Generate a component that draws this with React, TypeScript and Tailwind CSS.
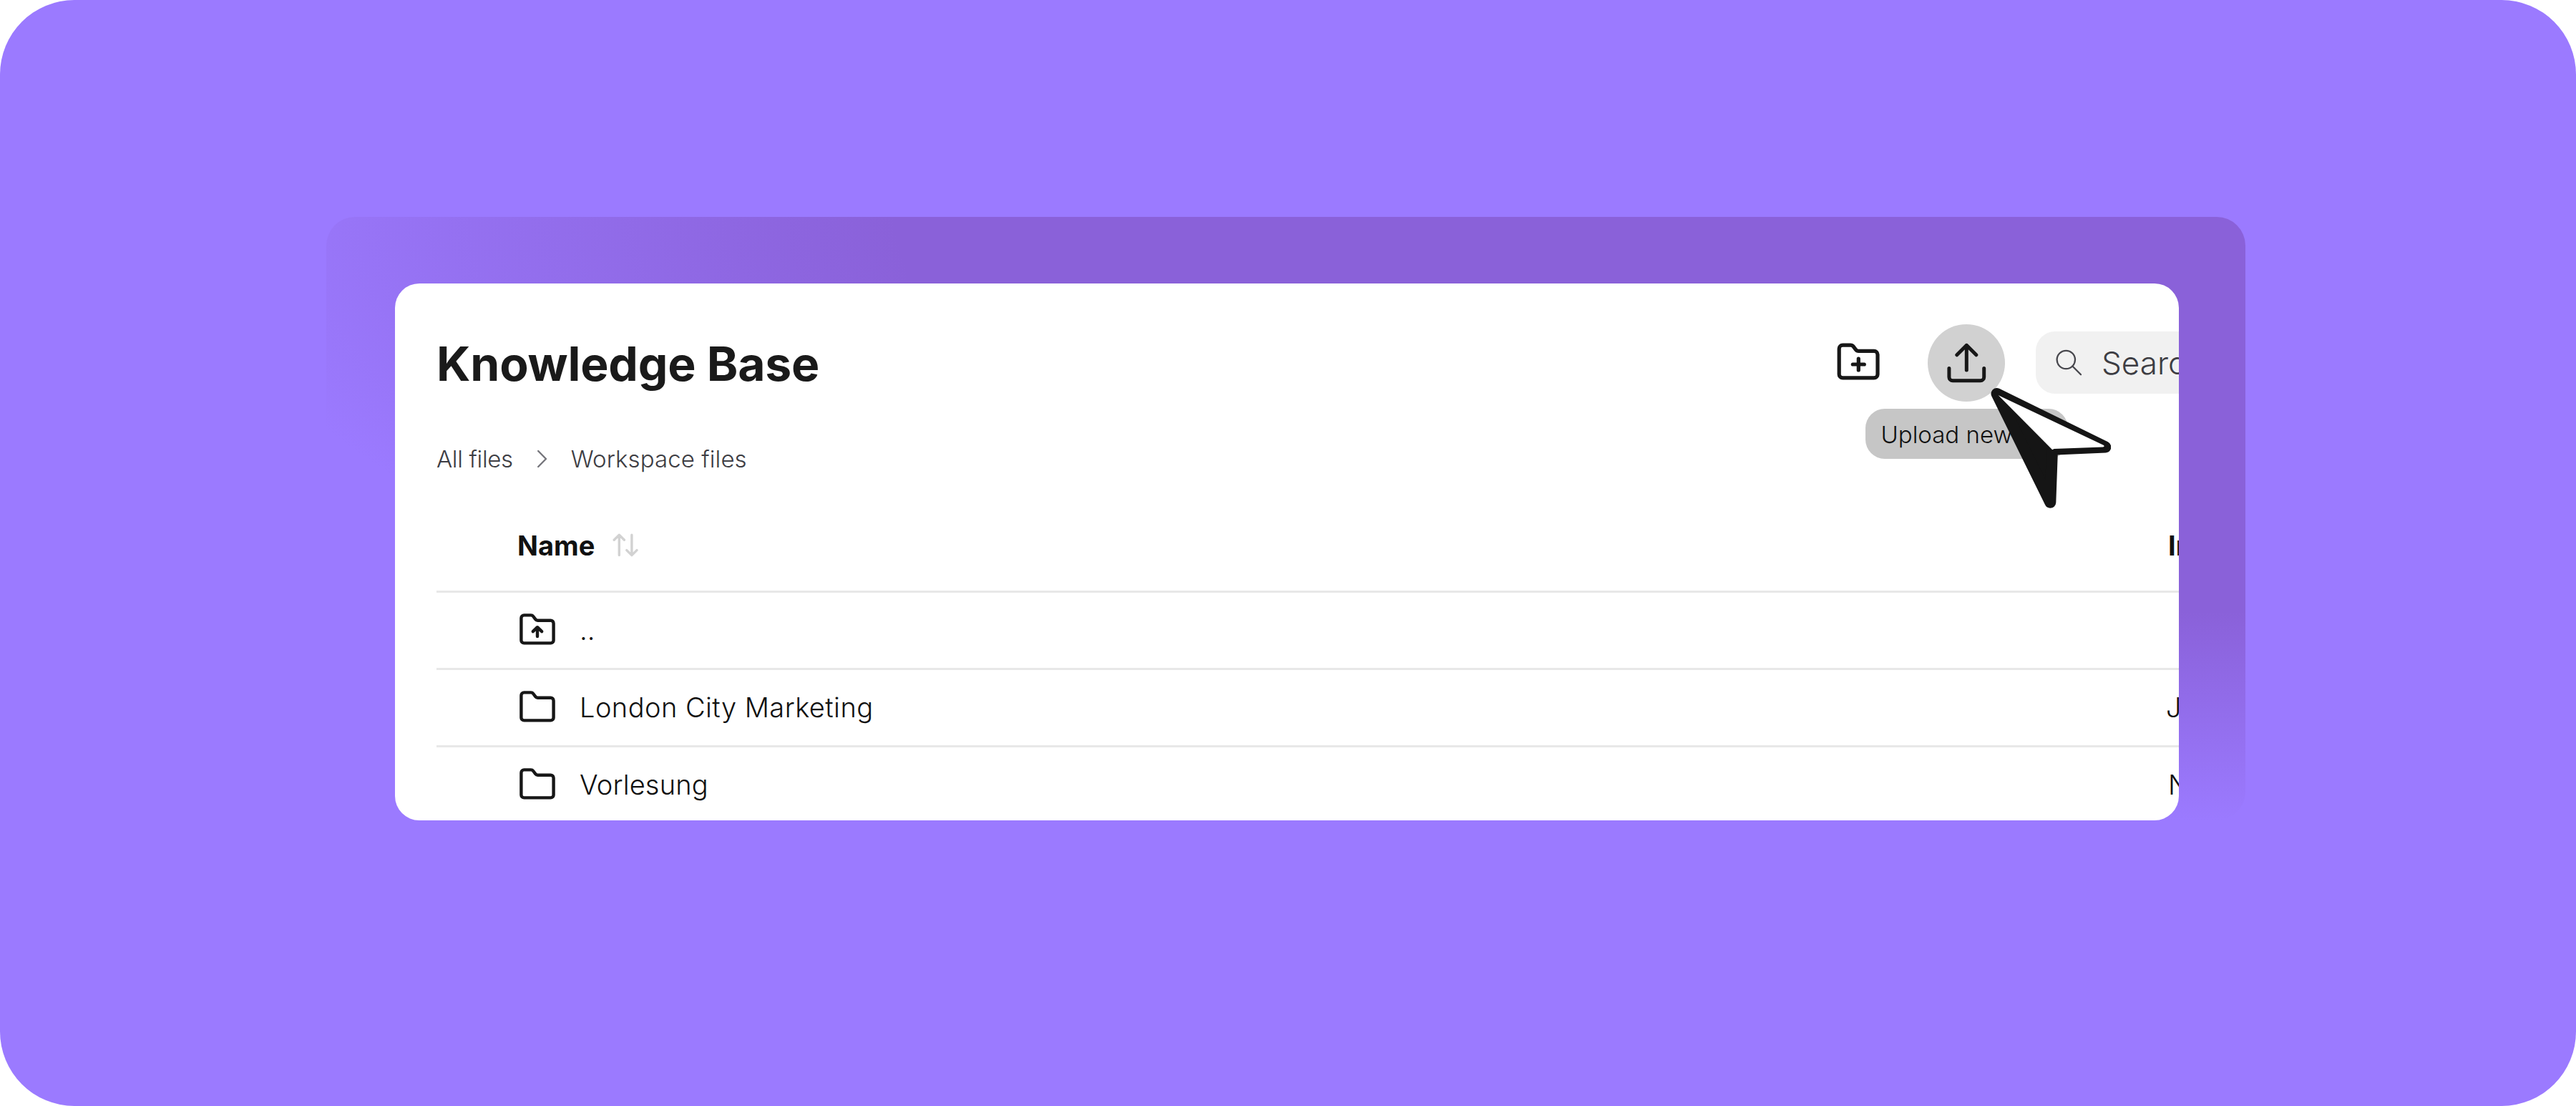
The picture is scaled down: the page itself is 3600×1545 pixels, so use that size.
import type { ReactNode } from 'react'

type Row = {
  name: string
  info: string
  parent?: boolean
  tracking: string
  infoClass: string
}

const rows: Row[] = [
  { name: '..', info: '', parent: true, tracking: 'tracking-normal', infoClass: '' },
  { name: 'London City Marketing', info: 'J', tracking: 'tracking-[0.45px]', infoClass: '-ml-[3px]' },
  { name: 'Vorlesung', info: 'N', tracking: 'tracking-[0.15px]', infoClass: '' },
]

const FolderIcon = ({ children }: { children?: ReactNode }) => (
  <svg width="50" height="44" viewBox="0 0 50 44" fill="none" stroke="#171717" strokeWidth="4.4" strokeLinecap="round" strokeLinejoin="round" className="mb-[3px] shrink-0">
    <path d="M2.4 6.4a4 4 0 0 1 4-4h9.6a4 4 0 0 1 3.2 1.6l3.1 4.1a4 4 0 0 0 3.2 1.6H43.6a4 4 0 0 1 4 4v23.7a4 4 0 0 1-4 4H6.4a4 4 0 0 1-4-4z" />
    {children}
  </svg>
)

const FolderPlusIcon = () => (
  <svg width="60" height="52" viewBox="0 0 60 52" fill="none" stroke="#171717" strokeWidth="5.2" strokeLinecap="round" strokeLinejoin="round" className="mb-[3px] shrink-0">
    <path d="M3.2 8.1a5 5 0 0 1 5-5h11a5 5 0 0 1 4 2l3.2 4.2a5 5 0 0 0 4 2H52a5 5 0 0 1 5 5v27.6a5 5 0 0 1-5 5H8.2a5 5 0 0 1-5-5z" />
    <path d="M30.3 22v16M22.3 30h16" />
  </svg>
)

const UploadIcon = () => (
  <svg width="108" height="108" viewBox="0 0 108 108" fill="none" stroke="#171717" strokeWidth="5" strokeLinecap="round" strokeLinejoin="round">
    <path d="M54.3 29.3v34.8M40.8 42.8l13.5-13.5 13.5 13.5M29.9 61.5v12.2a5 5 0 0 0 5 5h38.8a5 5 0 0 0 5-5V61.5" />
  </svg>
)

const SearchIcon = () => (
  <svg width="38" height="38" viewBox="0 0 38 38" fill="none" stroke="#47474d" strokeWidth="2.3" strokeLinecap="round" className="shrink-0">
    <circle cx="14.3" cy="14.5" r="12.7" />
    <path d="M23.3 23.5l11.7 11.7" />
  </svg>
)

const SortIcon = () => (
  <svg width="36" height="34" viewBox="0 0 36 34" fill="none" stroke="#d2d2d2" strokeWidth="3.4" strokeLinecap="round" strokeLinejoin="round" className="mb-[3px]">
    <path d="M9.3 31.6V3.2M2.2 10.2l7.1-7 7.1 7M26.9 3.2v28.4M19.8 24.6l7.1 7 7.1-7" />
  </svg>
)

const Pointer = () => (
  <svg width="180" height="180" viewBox="-10 -10 180 180" className="absolute top-[143.5px] left-[2218px]">
    <path
      d="M10.5 0L162.3 74.5 88 77.8 85.3 151.8z"
      fill="#151515"
      stroke="#151515"
      strokeWidth="16"
      strokeLinejoin="round"
    />
    <path d="M12.6 2.1L159.5 71.7q2.6 2 -0.6 2.9L90.6 77.1 88.2 78.3z" fill="#fff" />
  </svg>
)

const Header = () => (
  <header className="flex h-[109px] items-center">
    <h1 className="w-[1957px] shrink-0 pt-[2px] text-[66px] leading-none font-bold tracking-[-0.2px] text-[#1a1a1a]">
      Knowledge Base
    </h1>
    <FolderPlusIcon />
    <button type="button" className="ml-[67px] size-[108px] shrink-0 rounded-full bg-[#d1d1d1]">
      <UploadIcon />
    </button>
    <div className="ml-[43px] flex h-[87px] w-[480px] shrink-0 items-center rounded-[27px] bg-[#f1f1f1] pl-[28px] text-[44px] font-light text-[#3d3d43]">
      <SearchIcon />
      <span className="ml-[26px] pt-px">Search</span>
    </div>
  </header>
)

const Breadcrumb = () => (
  <nav className="mt-[57px] flex h-[48px] items-center text-[33px] font-light text-[#3d3d43]">
    <span className="tracking-[-0.35px]">All files</span>
    <svg width="16" height="26" viewBox="0 0 16 26" fill="none" stroke="#76767c" strokeWidth="2.4" strokeLinecap="round" strokeLinejoin="round" className="mb-[3px] ml-[33px]">
      <path d="M2.2 2L13 13 2.2 24" />
    </svg>
    <span className="ml-[32px] tracking-[0.1px]">Workspace files</span>
  </nav>
)

const FileTable = () => (
  <div className="mt-[34px] text-[38px] text-[#111]">
    <div className="flex h-[128px] items-center border-b-3 border-[#e8e8e8] pl-[113px] font-bold">
      <div className="flex w-[2307px] shrink-0 items-center gap-[25px]">
        <span>Name</span>
        <SortIcon />
      </div>
      <span>Info</span>
    </div>
    {rows.map((row) => (
      <div key={row.name} className="flex h-[108px] items-center border-b-3 border-[#e8e8e8] pl-[116px] font-light">
        <FolderIcon>{row.parent && <path d="M25 32V19.5M18.8 25.2l6.2-6 6.2 6" />}</FolderIcon>
        <span className={`ml-[34px] w-[2220px] shrink-0 ${row.tracking}`}>{row.name}</span>
        <span className={row.infoClass}>{row.info}</span>
      </div>
    ))}
  </div>
)

export default function App() {
  return (
    <div className="h-[1545px] w-[3600px] overflow-hidden rounded-[104px] bg-[#9b7aff] pt-[303px] pl-[456px] font-['Inter',sans-serif]">
      <div className="h-[843px] w-[2682px] rounded-[40px] bg-[radial-gradient(2827px_843px_at_2644px_0px,#8a61d9_65.4%,#8a61d900_100%)] pt-[93px] pl-[96px]">
        <main className="relative h-[750px] w-[2493px] overflow-hidden rounded-[34px] bg-white pt-[56px] pl-[58px]">
          <Header />
          <Breadcrumb />
          <FileTable />
          <div className="absolute top-[175px] left-[2054.5px] flex h-[70px] w-[283px] items-center rounded-[27px] bg-[#c6c6c6] pt-[3px] pl-[22px] text-[33px] font-light whitespace-nowrap text-[#111]">
            Upload new
          </div>
          <Pointer />
        </main>
      </div>
    </div>
  )
}
